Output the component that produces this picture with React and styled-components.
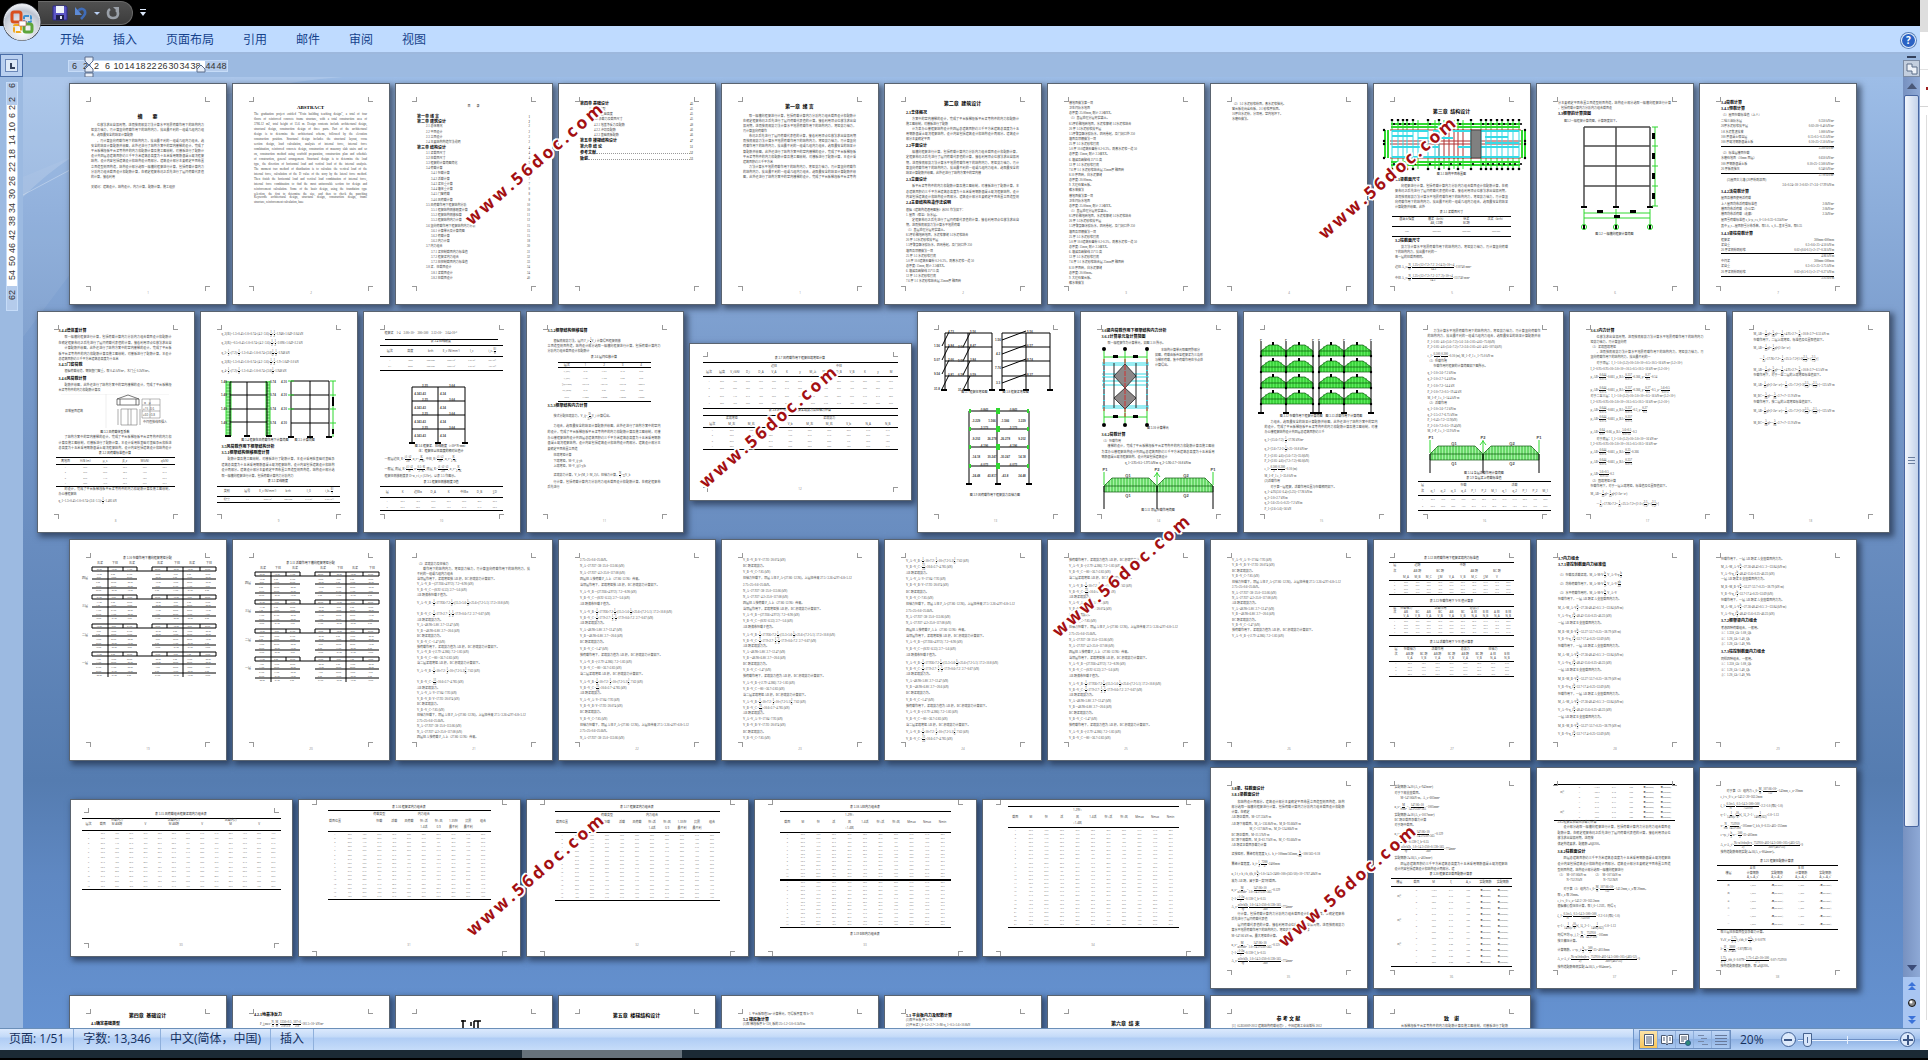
import { Fragment, useState } from "react";
import styled, { createGlobalStyle } from "styled-components";

/* ---------- document text ---------- */

const corpus =
  "本设计为某办公楼框架结构设计共四层总建筑面积约三千平方米建筑总高度为十五米采用钢筋混凝土现浇框架结构，设计内容包括建筑设计和结构设计两部分。建筑设计部分主要确定平面布置立面造型剖面构造，结构设计部分选取一榀横向框架进行计算，包括荷载计算内力分析内力组合截面设计和配筋计算，在确定框架布局之后先进行了层间荷载代表值的计算，接着利用顶点位移法求出自振周期，进而按底部剪力法计算水平地震荷载作用下的结构内力，弯矩剪力轴力，再计算竖向荷载作用下的结构内力，找出最不利的一组或几组内力组合，选取最安全的结果计算配筋并绘图，此外还进行了结构方案中的室内楼梯的设计，完成了平台板梯段板平台梁等构件的内力和配筋计算及施工图绘制，对楼板进行了配筋计算，本设计采用桩基础对基础承台和桩进行了受力和配筋计算。";

const english =
  "The graduation project entitled \"Yixin building teaching design\", a total of four floors of reinforced concrete frame structure, with a total construction area of 3786.12 m2, total height of 15.6 m. Design contents include architectural design, structural design, construction design of three parts. Part of the architectural design is to determine the architectural scheme, followed by the elevation construction position. Structural design includes the structural layout, cross section design, load calculation, analysis of internal force, internal force combination, reinforced concrete design, construction of masonry slab stairs and so on, construction method using scaffold preparation, construction plan and schedule of construction, general arrangement. Structural design is to determine the load type, the direction of horizontal load and vertical load of the internal analysis. The moment two method of distribution is to calculate the vertical load of the internal force, calculation of the D value of the story by the lateral force method. Then finish the horizontal load and vertical load combination of internal force, internal force combination to find the most unfavorable section for design and reinforcement calculation. Some of the basic design, using the foundation type selection, the first to determine the size, and then to check the punching calculation and checking, the foundation reinforcement.";

const wrapWords = (text, width) => {
  const lines = [];
  let line = "";
  text.split(" ").forEach((word) => {
    if ((line + word).length > width) {
      lines.push(line.trim());
      line = "";
    }
    line += word + " ";
  });
  lines.push(line.trim());
  return lines;
};

const cycle = (lines, from, count) =>
  Array.from({ length: count }, (_, i) => lines[(from + i) % lines.length]).join("\n");

const toc = [
  "&#第一章 绪 言|1",
  "&#第二章 建筑设计|2",
  "&+2.1 总体概况|2",
  "&+2.2 平面设计|2",
  "&+2.3 立面设计|2",
  "&+2.4 主要结构构造作法说明|2",
  "&#第三章 结构设计|4",
  "&+3.1 梁截面尺寸|4",
  "&+3.2 柱截面尺寸|4",
  "&+3.3 框架的计算简图简化|5",
  "&+3.4 荷载计算|6",
  "&++3.4.1 恒载计算|6",
  "&++3.4.2 活载计算|7",
  "&++3.4.3 梁柱重计算|7",
  "&++3.4.4 墙体重计算|8",
  "&++3.4.5 门窗荷载|8",
  "&++3.4.6 风荷载计算|8",
  "&+3.5 风荷载作用下框架结构分析|10",
  "&++3.5.1 框架结构侧移刚度计算|10",
  "&++3.5.2 框架结构侧移验算|11",
  "&++3.5.3 框架结构内力计算|12",
  "&+3.6 竖向荷载作用下框架结构内力分析|15",
  "&++3.6.1 计算单元及计算简图|15",
  "&++3.6.2 荷载计算|15",
  "&++3.6.3 内力计算|18",
  "&+3.7 内力组合|30",
  "&++3.7.1 梁控制截面内力标准值|31",
  "&++3.7.2 框架梁内力组合|32",
  "&++3.7.3 柱控制截面内力标准值|33",
  "&+3.8 梁、柱截面设计|34",
  "&++3.8.1 梁截面设计|34",
  "&++3.8.2 柱截面设计|40",
];

const practice = [
  "楼地面做法第一项",
  "卫生间防水地面",
  "总厚度: 25.00mm, 耐火 2.5级XX。",
  "（1）基层处理分层夯实填土。",
  "8.5厚彩釉地砖地面，水泥浆擦缝 1:2水泥浆结合",
  "20 厚 1:3水泥砂浆找平层",
  "1.5厚聚氨酯涂膜防水，四周卷起，及门洞口外 250",
  "墙面及顶棚做法一项",
  "25 厚 1:3 水泥砂浆打底",
  "5.0 厚 10.0建筑石膏粉 0.2-0.3%，刷素水泥浆一道 50",
  "总厚度: 15mm, 耐火 2.5级XX。",
  "6. 墙裙及踢脚线 25*15 高",
  "12 厚 1:3 水泥砂浆打底",
  "7.6 厚 1:1 水泥砂浆结合层 25mm厚 釉面砖",
  "8.10 厚面砖，白水泥擦缝",
  "总厚度: 20.00mm。",
  "9. 大理石窗台板。",
  "散水坡做法",
];

const balance = [
  "当顶层作用下，梁端弯矩按 AB 杆，BC 杆端剪力计算如下。",
  "V_A =V_B =-(27.936×4.97/2)÷7.2=-8.90 (kN)",
  "V_B =V_C =-(8.92+6.53)÷2.7=-5.6 (kN)",
  "AB 跨满布恒载 P 值为。",
  "V_A =V_B ={1/2}×17.936×7.2-{1/2}×(15.3×5.6-{1/3})×25.6×(7.2-5.1)÷17.2×10.8 (kN)",
  "V_B =V_C ={1/2}×17.9×2.7+{1/3}×{1/2}=17.9×0.6×7.2÷2.7=0.67 (kN)",
  "AB 跨梁端剪力为。",
  "V_A =48.98×5.80÷2.7=12.47 (kN)",
  "V_B =-48.98×6.80÷2.7=-20.6 (kN)",
  "BC 跨梁端剪力为。",
  "V_B =V_C =1.47 (kN)",
  "按荷载作用下，梁端剪力值为 AB 杆，BC 杆端剪力计算如下。",
  "V_A =V_B =(-2.79+4.286)÷7.2=1.83 (kN)",
  "V_B =V_C =-80+-36.7×2.83 (kN)",
  "当二层梁端弯矩 AB 杆，BC 杆端剪力计算如下。",
  "V_A =V_B ={1/2}×10×7.2+{1/2}×10×(7.2-5.1){1/2}÷7.62 (kN)",
  "V_B =V_C ={1/2}{1/2}×10.6×2.7=4.785 (kN)",
  "AB 跨梁端剪力。",
  "V_A =V_A+V=17.84+7.93 (kN)",
  "V_B =V_B+V=17.93+20.074 (kN)",
  "BC 跨梁端剪力。",
  "V_B =V_C=7.85 (kN)",
  "柱轴力恒载下，顶层 A 柱 P_A=(27.86+12.96)，上层柱传来 27.5+3.26×4.97×6.8×5.12",
  "2.75×25×0.6=25.6kN。",
  "N_A =27.937+38+25.0=113.06 (kN)",
  "N_A =27.937+4.2×25.0=117.08 (kN)",
  "四层柱 A 按荷载 P_A 上（27.86+12.96）传来。",
];

const beamForce = [
  "恒载作用下，一层 AB 跨梁 A 支座截面内力为。",
  "M_A =M_A -V{b/2}=-27.36-48.42×0.5÷2=-33.84 (kN·m)",
  "V_A =V-q_1{b/2}=48.42-15.6×0.25=46.23 (kN)",
  "一层 AB 跨梁 B 支座截面内力为。",
  "M_B =M_B -V{b/2}=-53.27+53.7×0.25=-38.79 (kN·m)",
  "V_B =V-q_1{b/2}=53.7-17.4×0.25=53.69 (kN)",
];

const design = [
  "M=147.06 kN·m，最大弯矩处计算。",
  "α_s={M/α1fcbh²}={147.06×10/1.0×14.3×250×565}=0.129",
  "ξ=1-{√1-2α/1}=0.138<ξ_b=0.55",
  "A_s={α1fcbξh/fy}={1.0×14.3×250×0.138×565/360}=774mm²",
];

const steel = (rows) =>
  Array.from(
    { length: rows },
    (_, i) => `:${i % 4 === 1 ? "四层" : ""}|${i % 2 ? "A" : "B"}|${-112 + i * 7}.6|0.${11 + i}|${570 + i * 3}|●(603mm)|●(509mm)`
  ).join("\n");

/* Each page is a list of blocks. "@a b" spreads its lines between the centres
   a and b, "@T top head bottom inset" is a ruled table, "!name a b" a figure. */
const rowOne = [
  {
    no: 1,
    text: "@34\n# 摘　　要\n@43 95\n~3 14\n~8 8\n@105\n关键词：建筑设计，结构设计，内力计算，配筋计算，施工组织",
  },
  {
    no: 2,
    text:
      "@25\n# ABSTRACT\n@32 106\n" +
      wrapWords(english, 84).slice(0, 17).map((l) => "=" + l).join("\n") +
      "\n@115 120\n=Keywords: architectural design, structural design, construction design, frame\nstructure, reinforcement calculation, base",
  },
  { no: "", text: "@24\n^ 目　　录\n@34 196\n" + toc.join("\n") },
  {
    no: "",
    text:
      "@21\n&#第四章 基础设计|45\n@27 53\n&+4.1 基础类型|45\n&++4.1.1 基础高度|45\n&++4.2 承载力及截面尺寸|45\n&++4.2.1 地基净反力及配筋|48\n&++4.2.2 冲切及配筋|46\n&++4.2.3 基础底板配筋|46\n@58 76\n&#第五章 楼梯结构设计|47\n&#第六章 结 论|51\n&.参考文献|52\n&.致谢|53",
  },
  { no: 1, text: "@24\n# 第一章  绪 言\n@34 95\n~4 8\n~6 10\n~3 36" },
  {
    no: 2,
    text:
      "@21\n# 第二章  建筑设计\n@30\n## 2.1总体概况\n@37 57\n~2 14\n~3 8\n@63\n## 2.2平面设计\n@70 91\n~5 25\n@97\n## 2.3立面设计\n@104 115\n~3 30\n@120\n## 2.4主要结构构造作法说明\n@128 199\n根据《建筑构造通用图集》苏J01 作法如下：\n1. 屋面（保温）防水层。\n~2 18\n" +
      cycle(practice, 3, 11),
  },
  { no: 3, text: "@21 201\n" + cycle(practice, 0, 36) },
  { no: 4, text: "@22 37\n（2）1:2 水泥砂浆粉面，素水泥浆抹光。\n窗台板花岗岩石板，2:1 砂浆厚贴面。\n10厚白水泥粉，分项用，室内地坪下。\n水磨石做法。" },
  {
    no: 5,
    text:
      "@29\n# 第三章  结构设计\n!plan 36 88\n@92\n^ 图 3.1 结构平面布置图\n@97\n## 3.1梁截面尺寸\n@104 125\n~5 10\n@130\n^ 表 3.1 梁截面尺寸\n@T 133 144 154 -3\n|混凝土强度|横梁（b×h）|纵梁|次梁（b×h）\n||AB, CD跨|BC跨|\n:C30|300×600|300×500|300×500\n@158\n## 3.2柱截面尺寸\n@165 175\n~2 14\n每一层的柱截面相同。\n@184\n边柱 A_c≥{N/fc}={1.25×(12×7.2×7.2÷2×14.3)×10³×4/14.3}=110740 mm²\n@195\n中柱 A_c≥{N/fc}={1.25×(12×7.2×7.2+2.7÷2)×10³×4/14.3}=151740 mm²",
  },
  {
    no: 6,
    text: "@21 26\n~~2 18\n@31\n## 3.3框架的计算简图\n@39\n+图3.2一榀框架计算简图，计算跨度如下。\n!frameOne 43 147\n@152\n^ 图 3.2 一榀横向框架计算简图",
  },
  {
    no: 7,
    text:
      "@20 26\n## 3.4荷载计算\n## 3.4.1恒载计算\n@33\n（1）屋面恒载标准值（上人）\n@39 60\n&二毡三油防水层|0.350 kN/m²\n&20厚水泥砂浆找平层|0.02×20=0.40 kN/m²\n&1:8 水泥焦渣找坡|1.000 kN/m²\n&100 厚混凝土保温层|0.15×0.5=0.25 kN/m²\n&100 厚现浇钢筋混凝土板|0.10×25=2.50 kN/m²\n@64\n-\n@66\n&|5.500 kN/m²\n@71\n（2）标准层楼面恒载\n@76 87\n&水磨石地面（10mm 面层）|0.650 kN/m²\n&100 厚钢筋混凝土板|0.10×25=2.500 kN/m²\n&20 厚板底抹灰|0.340 kN/m²\n@91\n-\n@93\n&|3.790 kN/m²\n@98 103\n+(3)屋面女儿墙 (20厚粉刷双面)\n&|3.6×0.24×18+2×0.02×17×3.6=17.99 kN/m\n@109\n## 3.4.2活荷载计算\n@116\n屋面及楼面使用活荷载\n@122 132\n&上人屋面均布活荷载标准值|2.0kN/m²\n&楼面均布活荷载（办公室）|2.0kN/m²\n&楼面均布活荷载（走廊）|2.5kN/m²\n@138 144\n屋面雪荷载标准值 s_k=μ_r s_0=1.0×0.35=0.35kN/m²\n其中 μ_r—屋面积雪分布系数，取1.0，s_0—基本雪压，取0.35\n@151\n## 3.4.3梁柱荷载计算\n@158 168\n&框架梁|300mm×600mm\n&梁自重|0.3×0.6×25=4.50 kN/m\n&20 厚梁侧粉刷砂浆|0.02×(0.6-0.1)×2×17=0.36 kN/m\n@171\n-\n@174 179\n&|4.86 kN/m\n&中间梁|300mm×500mm\n@184 190\n&梁自重|0.3×0.5×25=3.75 kN/m\n&20 厚梁侧粉刷砂浆|0.02×(0.5-0.1)×2×17=0.27 kN/m\n@194\n-\n@196\n&|3.95 kN/m",
  },
];

const rowTwo = [
  {
    no: 8,
    text:
      "@20\n## 3.4.4墙体重计算\n@27 33\n~2 30\n@38 49\n~3 20\n@54\n## 3.4.5门窗荷载\n@61\n+根据荷载规范，钢铝塑门窗重，取 0.45 kN/m²，木门重 0.2kN/m²。\n@68\n## 3.4.6风荷载计算\n@75 80\n~2 14\n!wind 83 118\n@122\n^ 图 3.3 风荷载体型系数\n@127 138\n~3 36\n@143\n^ 表 3.2 风荷载标准值计算\n@T 146 153 176 -3\n|离地面|H/B (m)|μ_s|β_z|W(kN)|q(kN)\n:*4 6\n@179 184\n~2 6\n@190\nq_1=1.3×0.45×1.0×0.74×(3.6+1.5)×{1/2}=1.485 kN",
  },
  {
    no: 9,
    text:
      "@23 60\nq_2(左)=1.3×0.45×1.0×0.74×(4.2+3.6)×{1/2}×{1/2}=1.948×1.049=2.04 kN\nq_2(右)=-0.5×0.45×1.0×0.74×(4.2+3.6)×{1/2}×{1/2}=2.096×1.049=2.2 kN\nq_3={1/2}×(7.2)×{1/2}=1.3×0.45×1.0×0.74×(3.6){1/2}×{1/2}=1.948 kN\nq_3(右)=1.3×0.45×1.0×0.74×(4.2+3.6)×{1/2}×{1/2}=1.9×1.049=2.0 kN\nq_4={1/2}×(7.2)×{1/2}=1.3×0.45×1.0×0.74×(3.6){1/2}=1.948 kN\n!windFrames 69 128\n@130\n^ 图 3.4 框架在风荷载作用下计算简图　　图 3.5 计算简图\n@136 142\n## 3.5风荷载作用下框架结构分析\n## 3.5.1框架结构侧移刚度计算\n@149 166\n~4 24\n@171\n^ 表 3.3 梁线刚度\n@T 175 185 192 -5\n|类别|层号|E_c (N/mm²)|b×h|I_0|i_b={EI/l}\n:框架梁|1-4|3.00×10⁴|300×600|5.4×10⁹|2.25×10¹⁰",
  },
  {
    no: 10,
    text:
      "@23\n框架梁　1-4　3.00×10⁴　300×500　3.12×10⁹　3.64×10¹⁰\n@29\n-\n@31\n^ 表 3.4 柱线刚度\n@T 34 45 60 -5\n|层次|高度|b×h|E_c (N/mm²)|I_c|i_c={EI/h}\n:1|4800|500×500|3.00×10⁴|5.2×10⁹|3.2×10¹⁰\n:2-4|3600|500×500|3.00×10⁴|5.2×10⁹|4.3×10¹⁰\n!stiffFrame 72 134\n@136 140\n^ 图 3.6 框架梁、柱线刚度（×10¹⁰N·mm）\n^ 注：框架柱以柱高度的相对比值计\n@148\n一般层边柱, K={i1+i2/2ic}, α_c={K/2+K}, 中柱, K={i1+i2/2ic}, α_c={K/2+K}\n@158\n一般层, 底层, K={i1+i2/ic}, α={0.5+K/2+K}, 底层, K={i1+i2+i3/2ic}, α_c={K/2+K}\n@166\n框架柱侧移刚度表 D=α_c i_c (12/h²)，以表 3.5 作图示。\n@172\n^ 表 3.5 框架柱侧移刚度 D值\n@T 175 186 200 -5\n|层|K|边柱α|D_A|K|中柱α|D_B|∑D\n:*2 8",
  },
  {
    no: 11,
    text:
      "@20\n## 3.5.2框架结构侧移验算\n@30 41\n+根据底部剪力法，层间 F_i={1/2}V_i 计算得到框架侧移\n~~2 14\n@47\n^ 表 3.6 层间位移计算\n@T 51 56 91 10\n|层次|1|2|3|4\n:F_i(kN)|3.48|4.104|3.42|3.72\n:V_i(kN)|14.01|11.02|6.00|3.72\n:∑D(N/mm)|175410|175410|175410|120016\n:Δu_i(mm)|0.10|0.07|0.03|0.02\n:Δu/h|1/4800|1/3600|1/3600|1/3600\n@95\n## 3.5.3框架结构内力计算\n@105\n+按式分配柱端剪力，V_ij={D/∑D}V_i 计算得出。\n@116 139\n~5 10\n@145 156\n+柱端弯矩计算\n+下端弯矩，M=V_ij·yh\n+上端弯矩，M=V_ij(1-y)h\n@164\n+梁端剪力计算，V_b=(M_1+M_2)/l，柱轴力计算，{N/1}=∑V_b\n@172 177\n~2 4",
  },
  {
    wide: true,
    inset: 14,
    no: 12,
    text:
      "@16\n^ 表 3.7 风荷载作用下框架柱端弯矩计算\n@T 19 34 66 -6\n||||||边柱|||||中柱|||\n|层次|层高|V_i(kN)|D_i|D_A|V_A|K|y|M_上|M_下|D_B|V_B|K|y|M\n:*4 15\n@68\n^ 表 3.8 风荷载作用下框架梁端剪力及柱轴力计算\n@T 72 84 107 -6\n||梁端弯矩|||||梁端剪力||\n|层次|M_左|M_右|l|V_b|M_左|M_右|V_b|N_A|N_B\n:*4 10",
  },
  {
    no: 13,
    text:
      "!moments 19 80\n@82\n^ 图 3.7 框架柱弯矩图　　　　　图 3.8 框架梁弯矩图\n!shears 97 175\n@185\n^ 图 3.9 风荷载作用下框架剪力及轴力图",
  },
  {
    no: 14,
    text:
      "@20 26\n## 3.6竖向荷载作用下框架结构内力分析\n## 3.6.1计算单元及计算简图\n@33\n+取一榀框架作为计算单元，如图 3.10 所示。\n!unit 36 116\n@118\n^ 图 3.10 计算单元\n@124\n## 3.6.2荷载计算\n@131\n（1）恒载作用\n@136 147\n~3 22\n@153\n^ q_1=3.95×0.5=1.975 kN/m  q_2=5.96×2.7=10.8 kN/m\n!load 156 198\n@200\n^ 图 3.11 顶层恒载作用简图",
  },
  {
    no: 15,
    text:
      "!storeys 28 103\n@106\n^ 图 3.12 恒载作用下框架计算简图　图 3.13 活载作用下计算简图\n@112 122\n~3 20\n@129 138\nq_1=(15.6×7.2)÷{1/2}=17.96 kN/m²\nq_2=[3.6×7.2-2×{1/2}]×25=10.8 kN/m²\n@146 151\nP_1=(2.05+4.6)×(5.6×7.2)=35.0(kN)\nP_2=(2.05+4.6)×(7.2×7.2)=86.0(kN)\n@158 166\ne_1={0.500/2}-{0.300/2}=0.10 (m)\nM_1=P_1 e_1=35.0 kN·m\n@171 199\n(2)活载作用\n+对于第一层框架，活载作用位置与恒载相同如下。\nq_1=4.95(3.6+6.4)×(5.25)=17.96 kN/m\nq_2=2.0×2.7 kN/m\nq_3=3.6×25×5×0.25=7.2 kN/m\nP_1=(2.6×5.6)=56 kN",
  },
  {
    no: 16,
    text:
      "@21 26\n~2 30\n@32 37\nP_1=2.05+4.6×(5.6×7.2)×5.6+3.6×2.05×4.65=75.0(kN)\nP_2=2.05+4.6×(5.6×7.2)×7.2×3.6×2.05×4.6+4.65=107.6(kN)\n@45\ne_1={0.500/2}-{0.300/2}=0.10 (m), M_1=P_1 e_1=75.0 kN·m\n@51 56\n（1）恒载作用\n+恒载作用时框架的计算简图如下图所示。\n@63 88\nq_1=2.0×3.6=7.2 kN/m\nq_2=2.0×2.7=5.4 kN/m\nP_1=2.0×7.2=14.4 kN\nP_2=2.0×7.2×0.5=19.44 kN\nM_1=P_1 e_1=14.4 kN·m\n@93\n（2）活载作用\n@99 121\nq_1=2.0×3.6=7.2 kN/m\nq_2=2.5×2.7=6.75 kN/m\nP_1=0.45×7.2=12.9(kN)\nP_2=2.0×7.2×0.5=19.4(kN)\nM_1=P_1 e_1=12.9 kN·m\n!load 124 162\n@163 167\n^ 图 3.14 各层活载作用计算简图\n^ 表 3.9 各层梁上荷载标准值\n@T 170 185 200 -10\n|层||||恒载|||||活载|||\n|次|q_1|q_2|q_3|q_4|P_1|P_2|M_1|q_1|q_2|P_1|P_2|M_1\n:*2 13",
  },
  {
    no: 17,
    text:
      "@20\n## 3.6.3内力计算\n@27 32\n~2 12\n@37\n（1）梁端固端弯矩\n@42 47\n~2 20\n@53 59\n+对于顶层：I_1=1.0×(5.2)×10×3.0×10⁴×0.5×10.5=16 kN·m² (5.2×10⁴)\nI_2=0.95×0.95×10×3.0×10⁴×10.5×0.5×10.5=16 kN·m² (5.2×10⁴)\n@66\nμ_AB={0.644/0.975}=0.661, μ_BA={0.357/0.975}=0.366, μ={0.27/0.5}=0.54\n@79\nμ_AB={0.644/0.975}=0.661, μ_BA={0.357/0.975}=0.366, μ={0.27/0.5}=0.5, μ={5.6×0.5/0.975}\n@86 92\n对于二至三层：I_1=1.0×(5.2)×10×3.0×10⁴×0.5=16 kN·m² (5.2×10⁴)\nI_2=0.95×0.95×10×3.0×10⁴×10.5×0.5×10.5=16 kN·m² (5.2×10⁴)\n@99\nμ_AB={0.644/0.975}=0.661, μ_BA={0.357/0.975}=0.3, μ={0.27/0.5}\n@108\nμ_AB={0.644/0.975}=0.661, μ_BA={0.357/0.975}\n@121\nμ_AB={0.64/0.97}=0.66, μ_BA={5.6×0.5/0.9755}=0.3\n@129 134\n+对于底层：I_1=1.0×(5.2)×10×3.0×10⁴=16 kN·m²\nI_2=0.95×0.95×10×3.0×10⁴×10.5×0.5×10.5=16 kN·m²\n@141\nμ_AB={0.644/0.975}=0.661, μ_BA={0.35/0.97}=0.366\n@151\nμ_AB={0.644/0.975}=0.661, μ_BA={0.357/0.975}\n@163\nμ_AB={5.6×0.5/0.9755}=0.3\n@171 176\n（2）固端弯矩计算\n恒载作用下，对于一层上端弯矩，标准值及位置取值如下。\n@183\nM_AB=-{1/12}ql²-{1/12}ql²(1-2a²+a³)\n@193\n+=-{1/12}×17.96×7.2²-{1/12}×25.5×7.2²×[1-2×({2.1/7.2})²+({2.1/7.2})³]",
  },
  {
    no: 18,
    text:
      "@23\nM_AB=-{1/12}ql²-{5/96}ql²=-{1/12}×4.95×2.7²-{5/96}×10.8×2.7²=6.55 kN·m\n@30\n恒载作用下，二层上端弯矩，标准值及位置取值如下。\n@37\nM_AB=-{1/12}ql²-{1/12}ql²(1-2a²+a³)\n@48\n+=-{1/12}×17.96×7.2²-{1/12}×25.5×7.2²[1-2({2.1/7.2})²+({2.1/7.2})³]\n@59\nM_AB=-{1/12}ql²-{5/96}ql²=-{1/12}×4.95×2.7²-{5/96}×10.8×2.7²=6.5 kN·m\n@65\n恒载作用下，对于一至二层的上端弯矩标准值如下。\n@74\nM_AB={1/12}ql²(1-2a²+a³)=-{1/12}×25×7.2²[1-2({2.1/7.2})²+({2.1/7.2})³]=-125 kN·m\n@85\nM_BC=-{5/96}ql²=-{5/96}×2.7²×7=11.9 kN·m\n@92\n恒载作用下，按二层的上端弯矩标准值如下。\n@100\nM_AB={1/12}ql²(1-2a²+a³)=-{1/12}×25×7.2²[1-2({2.1/7.2})²+({2.1/7.2})³]=-125 kN·m\n@112\nM_BC=-{5/96}ql²=-{5/96}×2.7²×7=11.9 kN·m",
  },
];

const rowThree = [
  { no: 19, text: "@20\n^ 表 3.10 恒载作用下横向框架弯矩分配\n!distribution 22 142" },
  { no: 20, text: "@25\n^ 表 3.11 活载作用下横向框架弯矩分配\n!distribution 27 146" },
  {
    no: 21,
    text:
      "@26\n（3）梁端剪力及柱轴力\n@31 36\n~2 12\n@41 57\n" + cycle(balance, 0, 4) + "\n@64 75\n" + cycle(balance, 4, 2) + "\n@82 125\n" + cycle(balance, 6, 9) + "\n@132 143\n" + cycle(balance, 15, 2) + "\n@150 199\n" + cycle(balance, 17, 10),
  },
  ...[22, 23, 24, 25].map((no, i) => ({ no, text: "@22 200\n" + cycle(balance, 23 - i * 4, 29 + (i % 2)) })),
  { no: 26, text: "@22 98\n" + cycle(balance, 18, 4) + "\n" + cycle(balance, 22, 4) + "\n" + cycle(balance, 6, 7) },
  {
    no: 27,
    text:
      "@20\n^ 表 3.12 风荷载作用下框架梁端内力标准值\n@T 23 41 56 -6\n|层||边跨||||中跨||||\n|次||AB 跨||BC 跨|||AB 跨||BC 跨|\n||M_A|M_B|M_C|∑M|V_A|V_B|M_C|∑M|V\n:*4 11\n@63\n^ 表 3.13 恒载作用下 V-N 值计算表\n@T 67 81 97 -6\n|层|恒载轴力|||活载作用|||总剪力|||\n|次|AB|BC|AB|BC|AB|BC|A 柱|B 柱|A 柱|B 柱\n||V_A|V_B|V_A|V_B|V_A|V_B|N_A|N_B|N_A|N_B\n:*4 11\n@104\n^ 表 3.14 活载作用下 V-N 值计算表\n@T 107 122 138 -6\n|层|恒载轴力||活载作用||总剪力||柱轴力|\n|次|AB 跨|BC 跨|AB 跨|BC 跨|AB 跨|BC 跨|A 柱|B 柱\n||V_A|V_B|V_A|V_B|V_A|V_B|N_A|N_B\n:*4 9",
  },
  {
    no: 28,
    text:
      "@20 26\n## 3.7内力组合\n## 3.7.1梁控制截面内力标准值\n@36 54\n（1）恒载及活载梁端，M_A=M-V·{b/2}, V_A=V-q·{b/2}\n（2）均布荷载作用下，M_A=M-V·{b/2}, V_A=V-{q/2}{b/2}\n（3）水平荷载作用时，M_A=M-V·{b/2}, V_A=V\n@61 195\n" +
      cycle(beamForce, 0, 18),
  },
  {
    no: 29,
    text:
      "@21 75\n" + cycle(beamForce, 0, 9) + "\n@82\n## 3.7.2框架梁内力组合\n@90 106\n考虑四种荷载组合，一般用。\n①：1.35S_Gk+1.0S_Qk\n②：1.2S_Gk+1.4S_Qk\n③：1.2S_Gk+1.4S_Wk\n@113\n## 3.7.3柱控制截面内力组合\n@121 137\n同样四种组合，一般用。\n①：1.35S_Gk+1.0S_Qk\n②：1.2S_Gk+1.4S_Qk\n③：1.2S_Gk+1.4S_Wk",
  },
];

const rowFour = [
  {
    wide: true,
    inset: 14,
    no: 30,
    text:
      "@16\n^ 表 3.15 风荷载组合框架梁端内力组合表\n@T 19 32 91 -8\n|||恒载内力||||活载内力||||风载内力|||\n|层次|截面|M AB跨||V||M AB跨||V||M||V|\n||||||||||||||\n:*12 14",
  },
  {
    wide: true,
    inset: 6,
    no: 31,
    text: "@9\n^ 表 3.16 框架梁内力组合表\n@T 11 34 101 10\n||||荷载类型|||内力组合|||\n|截面位置|||恒载|活载|风荷载|恒+活|恒+风|1.35恒|抗震|组合\n|||||||1.4活|0.9|最不利|最不利\n:*16 11",
  },
  {
    wide: true,
    inset: 6,
    no: 32,
    text: "@9\n^ 表 3.17 框架梁内力组合表\n@T 12 35 102 9\n||||荷载类型|||内力组合|||\n|截面位置|||恒载|活载|风荷载|恒+活|恒+风|1.35恒|抗震|组合\n|||||||1.4活|0.9|最不利|最不利\n:*16 11",
  },
  {
    wide: true,
    inset: 6,
    no: 33,
    text:
      "@9\n^ 表 3.18 A柱内力组合表\n@T 12 34 81 6\n|||||1.2恒+||||||\n|截面|M|恒|活|风|1.4活|恒+活|恒+风|Mmax|Nmax|Nmin\n|||||+1.4风||||||\n:*12 11\n@T 81 82 129 6\n:*12 11\n@136\n^ 表 3.19 B柱内力组合表",
  },
  {
    wide: true,
    inset: 6,
    no: 34,
    text: "@T 7 29 129 6\n|||||1.2恒+||||||\n|截面|M|恒|活|风|1.4活|恒+活|恒+风|Mmax|Nmax|Nmin\n|||||+1.4风||||||\n:*24 11",
  },
  {
    no: 35,
    text:
      "@22 28\n## 3.8梁、柱截面设计\n## 3.8.1梁截面设计\n@36 47\n~3 6\nAB 跨正截面，M=127.35kN·m\n@58 79\nAB 跨下部截面，M_A=136.8kN·m，M_B=93.66kN·m\n+++M_C=117.8kN·m，M_D=124.86kN·m\nBC 跨正截面，M=21.57kN·m\nBC 跨下部截面，M_B=61.71kN·m，M_C=93.66kN·m\nAB 跨梁正截面承载力计算\n@87\n梁按矩形，翼缘有效宽度 b_f，h_f=100mm/565mm, {h/h0}=100/565=0.18\n@97\n翼缘计算宽度，b_f={l/3}={7200/3}=2400mm\n@107\nα_1 f_c b_f h_f(h_0-{h/2})=1.0×14.3×2400×100×(565-50)×10=1767.48kN·m\n@115\n故为 AB 跨，属于第一类T形截面。\n@123 140\n" +
      cycle(design, 1, 3) +
      "\n@148 164\n~2 12\n~2 26\n@170 194\n" +
      cycle(design, 0, 4),
  },
  {
    no: 36,
    text:
      "@21 32\n实配钢筋 3●20 (A_s=942mm²)\n对于下部支座截面。\n+M=147.06kN·m，A_s=603mm²\n@40\nα_s={M/fcbh²}={147.06×10/14.3×250×565}=1005mm²\n@49 59\n实配钢筋 4●18 (A_s=1017mm²)\nBC 跨正截面承载力计算\n对于跨中截面。\n@67 82\n" +
      cycle(design, 1, 3) +
      "\n@92 103\n实配钢筋 2●16(A_s=402mm²)\n~2 20\n@108\n^ 表 3.20 框架梁正截面配筋计算表\n@T 111 119 200 -4\n|楼层|截面|M|ξ|A_s|实配钢筋|实配钢筋\n" +
      steel(13),
  },
  {
    no: 37,
    text:
      "@T 17 18 54 -4\n" +
      steel(7) +
      "\n@56 72\n3.8.2框架梁斜截面承载力计算\n~3 12\n@78\n满足构造要求，配箍筋 ●8@200。\n@85\n## 3.8.2柱截面设计\n@92 104\n~3 22\n@109 114\n（1）　M=107.06kN·m　　　（2）　M=107.6kN·m\n　　　N=752.91kN　　　　　　　N=752.9kN\n@122\n+对于第（1）组内力 e_0={M/N}={107.06×10³/752}=142.2mm, e_a 取 20mm。\n@129 140\n取 e_a 取 20mm。\ne_i=e_0+e_a=142.2+20=162.2mm\n根据偏心受压柱计算，取 l_0=1.25H，则得 η\n@149\nζ_1={0.5fcA/N}={0.5×14.3×500×500/752910}=2.3>1.0 (取ζ=1.0)\n@159\nη=1+{1/1400(e/h)}({l0/h})²ζ_1ζ_2=1+{1/1400(162)}×1.0=1.13\n@168 175\n则得平均 ηe_i, ξ={N/fcb}={752910/14.3×500}=105mm\n按大偏压计算。\n@183\n计算钢筋，e=ηe_i+{h/2}-a={500/2}-35=403.8mm\n@192\nA_s=A_s'={Ne-α1fcbx(h-x/2)/fy(h0-a)}={752910×403-14.3×500×105×(465-52)/360×(465-35)}<0\n@201\n按构造配筋每侧实配 4●16(A_s=804mm²)。",
  },
  {
    no: 38,
    text:
      "@24\n+对于第（2）组内力 e_0={M/N}={107.06×10³/752}=142mm, e_a=20mm\n@31\ne_i=e_0+e_a=142.2+20=162.2mm\n@39\nζ_1={0.5fcA/N}={0.5×14.3×500×500/752910}=2.3>1.0 (取ζ=1.0)\n@48\nη=1+{1/1400(e/h)}({l0/h})²ζ_1ζ_2=1+{1/1400(162)}×1.0=1.13\n@59\nx={N/fcb}={752910/14.3×500}=105mm<ξ_b h_0=0.55×465=255mm\n@68\ne=ηe_i+{h/2}-a=+{500/2}-35=403mm\n@78\nA_s=A_s'={Ne-α1fcbx(h-x/2)/fy(h0-a)}={752910×403-14.3×500×105×(465-52)/360×(465-35)}<0\n@86\n按构造配筋每侧实配 4●16(A_s=804mm²)。\n@95\n^ 表 3.21 框架柱配筋计算表\n@T 98 115 163 -4\n||A 柱||B 柱|\n|楼层|计算钢筋|实配钢筋|计算钢筋|实配钢筋\n||A_s=A_s'|A_s=A_s'|A_s=A_s'|A_s=A_s'\n:四|A_min|4●(804mm²)|A_min|4●(804mm²)\n:四|A_min|4●(804mm²)|A_min|4●(804mm²)\n:三|A_min|4●(804mm²)|A_min|4●(804mm²)\n:二|A_min|4●(804mm²)|A_min|4●(804mm²)\n:一|A_min|4●(804mm²)|A_min|4●(804mm²)\n:一|A_min|4●(804mm²)|A_min|4●(804mm²)\n@166\n取三层柱斜截面受剪承载力计算。\n@173\nV≤V_u={1.75/λ+1}f_t bh_0+{nA/s}h_0+0.07N\n@182\nλ={H/2h}={3600/2×465}=3.87(取3.0)\n@193\n{1.75/λ+1}f_tbh_0+0.07N={1.75×1.43×10×500/3+1}+0.07×752910\n@200\n按构造配筋满足柱箍筋，取 ●8@200。",
  },
];

const rowFive = [
  { no: "", text: "@21\n# 第四章  基础设计\n@29\n## 4.1确定基础类型" },
  { no: "", text: "@20\n## 4.2.1地基净反力\n@29\n+P_j,max={N/A}+{M/W}={1350×0.5/2.8×2.8}+{107×6/2.8}=181.5×10³ kN/m²" },
  { no: "", text: "!stub 24 40" },
  { no: "", text: "@21\n# 第五章  楼梯结构设计" },
  { no: "", text: "@20\n+1. 平台板取值1m² 计算单元，可得板厚度 取 h=70\n@25\n## 5.2 梯段板计算\n@30\n(1)取 梯段板厚 h=120, 板的 25×1.2=3.0×0.5kN/m" },
  { no: "", text: "@21\n## 5.3 平台板内力及配筋计算\n@26 30\n(1)取平台板 厚 h=70\n(2)平台梁 l_0=1.2×2.7²÷2×M×q_1=0.5×5.6×10.8kN" },
  { no: "", text: "@29\n# 第六章  结 束" },
  { no: "", text: "@24\n# 参 考 文 献\n@32\n[1]《GB50009-2012 建筑结构荷载规范》，中国建筑工业出版社 2012" },
  { no: "", text: "@24\n# 致　谢\n@32\n~1 36" },
];

/* ---------- figures, drawn in page coordinates ---------- */

const Lines = ({ d, c = "#000", w = 1 }) => <path d={d} stroke={c} strokeWidth={w} fill="none" />;

const Num = ({ x, y, children, s = 3, a = "middle" }) => (
  <text x={x} y={y} fontSize={s} fontWeight="700" textAnchor={a} fontFamily="Liberation Sans, sans-serif" fill="#000">
    {children}
  </text>
);

const grid = (xs, ys, bottom) =>
  xs.map((x) => `M${x} ${ys[0]}V${bottom}`).join("") + ys.map((y) => `M${xs[0]} ${y}H${xs[xs.length - 1]}`).join("");

const Feet = ({ xs, y }) => <Lines d={xs.map((x) => `M${x - 3} ${y}h6`).join("")} w={2} />;

const GREEN = "#2fd82f";
const CYAN = "#35dbe6";

const Plan = () => {
  const xs = [19, 25, 30, 34, 40, 45, 55, 62, 66, 71, 76, 81, 85, 90, 98, 108, 113, 118, 124, 129, 135, 140, 146];
  const posts = xs.filter((_, i) => i % 2 === 0 || i > 14 || i < 5);
  return (
    <>
      <Lines d="M18 5H147M18 8H147M18 43H147M18 46H147M12 11V39M15 11V39M149 11V39M152 11V39" c={GREEN} w={2} />
      <Lines d={xs.map((x) => `M${x} 1V11M${x} 39V50`).join("")} c={GREEN} />
      <Lines d={xs.slice(8, 15).map((x) => `M${x} 10V40`).join("") + "M17 11H148M17 22H148M17 25H148M17 39H148"} c="#b03030" w={1} />
      <Lines d={xs.map((x) => `M${x} 11V39`).filter((_, i) => i < 9 || i > 13).join("")} c={CYAN} />
      <Lines d="M19 12H55M60 12H146M19 17H40M45 19H80M19 28H66M85 28H146M112 18H135M112 24H146M19 38H146" c={CYAN} w={2} />
      <rect x="98" y="11" width="10" height="28" fill="#808080" stroke="#222" strokeWidth="0.6" />
      {posts.map((x) => (
        <g key={x}>
          <circle cx={x} cy="1" r="1.3" />
          <circle cx={x + 2} cy="5" r="1.1" />
          <circle cx={x + 2} cy="45" r="1.1" />
          <circle cx={x} cy="50" r="1.3" />
        </g>
      ))}
      {[11, 22, 25, 39].map((y) => (
        <g key={y}>
          <circle cx="11" cy={y} r="1.2" />
          <circle cx="152" cy={y} r="1.2" />
        </g>
      ))}
    </>
  );
};

const FrameOne = () => (
  <>
    <Lines d={grid([48, 80, 114], [1, 20, 40, 60], 80)} c="#4a4a4a" w={1.5} />
    <Feet xs={[48, 80, 114]} y={81} />
    <Lines d="M119 1V80M116 1h6M116 20h6M116 40h6M116 60h6M116 80h6M48 83V98M80 83V98M114 83V98M48 87H114M48 92H114" c={GREEN} />
    {[10, 30, 50, 70].map((y) => (
      <rect key={y} x="116" y={y - 3} width="3" height="6" />
    ))}
    <path d="M61 84h6v3h-6zM94 84h6v3h-6zM78 89h6v3h-6z" />
    {[48, 80, 114].map((x) => (
      <g key={x}>
        <circle cx={x} cy="101" r="2.6" fill="#fff" stroke={GREEN} />
        <rect x={x - 1} y="99" width="2" height="4" />
      </g>
    ))}
  </>
);

const Wind = () => (
  <>
    <Lines d="M24 0H132M69 0V34" c="#ddd" w={0.5} />
    <text x="28" y="18" fontSize="3">双坡屋面建筑</text>
    <Lines d="M80 11V5l11-4 11 4v6zM80 5h22M83 5v6M99 5v6" c="#555" w={0.8} />
    <Lines d="M84 15h16v16h-16zM91 15v16M94 15v16M81 15v16M103 15v16" c="#777" w={0.6} />
    <Lines d="M105 5h18v19h-18zM113 5v19M105 11h18M105 17h18" c="#888" w={0.6} />
    <text x="107" y="10" fontSize="3">α　μ</text>
    <text x="106" y="16" fontSize="3">≤15 -0.6</text>
    <text x="106" y="22" fontSize="3">≥60 +0.8</text>
    <text x="106" y="29" fontSize="3">中间值按线性插入</text>
  </>
);

const WindFrames = () => (
  <>
    <path d="M26 1h5v55h-5zM66 1h4v55h-4z" fill="#9df59d" />
    <Lines d={Array.from({ length: 18 }, (_, i) => `M26 ${2 + i * 3}h5M66 ${2 + i * 3}h4`).join("")} c="#11a011" w={0.6} />
    <Lines d="M26 1V56M31 1V56M66 1V56M70 1V56" c={GREEN} />
    <Lines d={grid([30, 47, 67], [2, 15, 29, 42], 56)} />
    <Feet xs={[28, 47, 69]} y={56} />
    <Lines d={grid([91, 110, 129], [1, 15, 29, 43], 57)} />
    <Feet xs={[91, 110, 129]} y={57} />
    <Lines d="M133 1V57M130 1h6M130 15h6M130 29h6M130 43h6M88 1h6M88 15h6M88 29h6" c={GREEN} />
    {[2, 15, 29, 43].map((y) => (
      <g key={y}>
        <Num x={24} y={y + 1}>1.49</Num>
        <Num x={73} y={y + 1}>0.74</Num>
        <Num x={84} y={y + 1}>4.10</Num>
      </g>
    ))}
    <path d="M132 17h2v9h-2zM132 49h2v5h-2z" />
  </>
);

const StiffFrame = () => (
  <>
    <Lines d={grid([49, 75, 102], [4, 18, 32, 46], 60)} />
    <Feet xs={[49, 75, 102]} y={60} />
    {[4, 18, 32, 46].map((y) => (
      <g key={y}>
        <Num x={62} y={y - 0.5}>2.25</Num>
        <Num x={89} y={y - 0.5}>3.64</Num>
        <Num x={57} y={y + 8}>4.343.43</Num>
        <Num x={80} y={y + 8}>4.34</Num>
      </g>
    ))}
  </>
);

const Moments = () => (
  <>
    <Lines d={grid([28, 51, 75], [3, 17, 31, 46], 60)} />
    <Lines d={[3, 17, 31, 46].map((y) => `M25 ${y + 13}L32 ${y - 1}M46 ${y + 14}L53 ${y}`).join("")} />
    <Feet xs={[27, 50, 75]} y={60} />
    <Lines d={grid([85, 109, 133], [3, 17, 31, 46], 60)} />
    <Lines d={[3, 17, 31, 46].map((y) => `M85 ${y + 7}L109 ${y - 2}`).join("")} />
    <Feet xs={[85, 109, 133]} y={60} />
    {[3, 17, 31, 46].map((y, i) => (
      <g key={y}>
        <Num x={34} y={y}>{[4.73, 9.84, 2.66, 0.81][i]}</Num>
        <Num x={56} y={y}>{[5.56, 8.47, 3.84, 0.59][i]}</Num>
        <Num x={20} y={y + 14}>{[1.56, 5.07, 9.54, 31.8][i]}</Num>
        <Num x={44} y={y + 15}>{[2.04, 5.58, 6.58, 31.4][i]}</Num>
        <Num x={81} y={y + 8}>{[1.56, 4.2, 7.76, 3.3][i]}</Num>
        <Num x={113} y={y}>{[5.56, 6.57, 8.74, 8.37][i]}</Num>
      </g>
    ))}
  </>
);

const Shears = () => (
  <>
    <Lines d={grid([52, 80, 112], [3, 21, 39, 58], 76)} />
    <Feet xs={[52, 81, 112]} y={76} />
    {[3, 21, 39, 58].map((y, i) => (
      <g key={y}>
        <Lines d={`M53 ${y - 2}v4M80 ${y - 3}v6M82 ${y - 3}v6M111 ${y - 2}v4`} c={GREEN} w={2} />
        <Num x={67} y={y - 0.5}>{["-0.843", "-2.173", "-4.196", "-6.072"][i]}</Num>
        <Num x={96} y={y - 0.5}>{["-0.843", "-2.173", "-4.196", "-6.072"][i]}</Num>
        <Num x={59} y={y + 11}>{["-3.229", "-9.202", "-14.18", "-24.48"][i]}</Num>
        <Num x={75} y={y + 11}>{["1.566", "26.278", "30.247", "43.817"][i]}</Num>
        <Num x={88} y={y + 11}>{["-1.566", "-26.278", "-30.247", "-43.8"][i]}</Num>
        <Num x={105} y={y + 11}>{["3.229", "9.202", "14.18", "24.48"][i]}</Num>
      </g>
    ))}
  </>
);

const Unit = () => (
  <>
    <Lines d="M24 3V16M45 3V16M67 3V16M24 10H67M24 61V76M45 61V76M67 61V76M24 70H67" c={GREEN} />
    <Lines d="M22 16h47M22 18h47M22 27h47M22 30h47M22 34h47M22 38h47M22 59h47M22 61h47" c={CYAN} />
    <Lines d="M24 16V61M67 16V61" c={CYAN} w={2} />
    <path d="M45 17L56 29 45 41 34 29zM45 41L56 51 45 62 34 51z" fill="#8d8787" stroke="#222" strokeWidth="0.8" />
    <Lines d="M34 16V61M56 16V61" c="#222" />
    <path d="M24 12V64M45 12V70M67 12V64" stroke="#d03030" strokeDasharray="5 1" />
    {[24, 45, 67].map((x) => (
      <g key={x}>
        <circle cx={x} cy="2" r="2" />
        <circle cx={x} cy="78" r="2" />
      </g>
    ))}
    <path d="M33 8h5v3h-5zM53 8h5v3h-5zM33 68h5v3h-5zM53 68h5v3h-5z" />
    <text x="81" y="4" fontSize="3">本结构计算单元取图阴影部分</text>
    <text x="75" y="9" fontSize="3">如图，荷载由板传至框架梁为三角形</text>
    <text x="75" y="14" fontSize="3">与梯形荷载，集中荷载作用在节点处</text>
    <text x="75" y="19" fontSize="3">计算得出。</text>
  </>
);

const Trapezoids = ({ xs, top, base, low, step = 3, fill = "#5dec5d" }) => {
  const shape = (a, b) => `M${a} ${base}L${a + 8} ${top}H${b - 8}L${b} ${base}V${low}H${a}z`;
  const bars = [];
  for (let x = xs[0] + 2; x < xs[2]; x += step) {
    const near = Math.min(...xs.map((v) => Math.abs(v - x)));
    bars.push(`M${x} ${Math.max(top, base - near)}V${low}`);
  }
  return (
    <>
      <path d={shape(xs[0], xs[1]) + shape(xs[1], xs[2])} fill={fill} />
      <Lines d={bars.join("")} c="#12b012" w={0.8} />
      <path d={shape(xs[0], xs[1]) + shape(xs[1], xs[2]) + `M${xs[0]} ${base}H${xs[2]}`} fill="none" stroke="#0c540c" strokeWidth="0.7" />
    </>
  );
};

const Load = () => (
  <>
    <Lines d="M24 5V18M77 5V18M133 5V18M74 10l3-4 3 4" c={GREEN} />
    <Trapezoids xs={[24, 77, 133]} top={11} base={19} low={25} fill="#a4f2a4" />
    <Lines d="M24 19V42M77 19V42M133 19V42" />
    <Num x={25} y={4} s={4}>P1</Num>
    <Num x={77} y={4} s={4}>P2</Num>
    <Num x={133} y={4} s={4}>P1</Num>
    <Num x={48} y={10} s={4}>Q1</Num>
    <Num x={106} y={10} s={4}>Q2</Num>
    <Num x={48} y={30} s={4}>Q1</Num>
    <Num x={106} y={30} s={4}>Q2</Num>
  </>
);

const Storeys = () => (
  <>
    {[[18, 43, 70], [76, 101, 128]].map((xs) => (
      <g key={xs[0]}>
        {[6, 22, 38, 54].map((y) => (
          <g key={y}>
            <Trapezoids xs={xs} top={y} base={y + 6} low={y + 11} />
            <circle cx={xs[0]} cy={y + 11} r="1.2" />
            <circle cx={xs[1]} cy={y + 11} r="1.2" />
            <circle cx={xs[2]} cy={y + 11} r="1.2" />
            <rect x={xs[0] + 11} y={y - 3} width="2" height="3" />
            <rect x={xs[1] + 12} y={y - 3} width="2" height="3" />
          </g>
        ))}
        <Lines d={xs.map((x) => `M${x} 2V74`).join("")} />
        <Feet xs={xs} y={74} />
        {xs.map((x) => (
          <Num key={x} x={x} y={2}>P</Num>
        ))}
      </g>
    ))}
  </>
);

const Distribution = () => (
  <>
    {[28, 43, 60, 88, 105, 120, 137].map((x) => (
      <text key={x} x={x} y="3" fontSize="3">{x % 2 ? "下柱" : "右梁"}</text>
    ))}
    {[6, 34, 63, 91].map((y, k) => (
      <g key={y}>
        <Lines d={`M23 ${y}h45v4h-45zM83 ${y}h64v4h-64zM54 ${y}v4M98 ${y}v4M131 ${y}v4M68 ${y + 4}h15M23 ${y + 12}h45M83 ${y + 12}h64M23 ${y + 21}h45M83 ${y + 21}h64`} />
        <text x="13" y={y + 12} fontSize="3">{"四三二一"[k]}层</text>
        {[3, 8, 11, 16, 20, 24].map((dy, r) =>
          [27, 42, 58, 86, 104, 118, 136].map((x, i) => (
            <text key={x + "-" + r} x={x} y={y + dy} fontSize="2" fill="#777">
              {(((x * 7 + r * 13 + k * 5 + i) % 89) - 40.5).toFixed(2)}
            </text>
          ))
        )}
      </g>
    ))}
    <Lines d="M39 6V116M114 6V116" />
  </>
);

const Stub = () => <Lines d="M68 1V16M66 2H71M79 2V16M79 2H86M83 2V16M76 3v4" w={1.5} />;

const figures = {
  plan: Plan,
  frameOne: FrameOne,
  wind: Wind,
  windFrames: WindFrames,
  stiffFrame: StiffFrame,
  moments: Moments,
  shears: Shears,
  unit: Unit,
  load: Load,
  storeys: Storeys,
  distribution: Distribution,
  stub: Stub,
};

/* ---------- page rendering ---------- */

const inline = (text) =>
  text.split(/(\{[^/}]*\/[^}]*\})/).map((part, i) => {
    if (part[0] !== "{") return <Fragment key={i}>{part}</Fragment>;
    const [top, bottom] = part.slice(1, -1).split("/");
    return (
      <Fraction key={i}>
        <span>{top}</span>
        <span>{bottom}</span>
      </Fraction>
    );
  });

const cellsOf = (lines, mark) =>
  lines
    .filter((l) => l[0] === mark)
    .flatMap((l) => {
      if (l[1] !== "*") return [l.slice(1).split("|")];
      const [rows, cols] = l.slice(2).split(" ").map(Number);
      return Array.from({ length: rows }, (_, r) =>
        Array.from({ length: cols }, (_, c) => (c === 0 ? String(r + 1) : (((r * 31 + c * 17) % 90) + 8.6).toFixed(1)))
      );
    });

const parse = (text) => {
  const blocks = [];
  text.split("\n").forEach((line) => {
    if (line[0] === "@" || line[0] === "!") {
      blocks.push({ head: line, lines: [] });
    } else {
      blocks[blocks.length - 1].lines.push(line);
    }
  });
  let end = 0;
  return blocks.map(({ head, lines }) => {
    const parts = head.slice(head[1] === "T" ? 3 : 1).split(" ");
    let block;
    if (head[0] === "!") {
      block = { kind: "figure", name: parts[0], from: Number(parts[1]), to: Number(parts[2]) };
    } else if (head[1] === "T") {
      const [top, rule, bottom, inset] = parts.map(Number);
      block = { kind: "table", from: top, rule, to: bottom, inset, lines };
    } else {
      const from = Number(parts[0]);
      block = { kind: "lines", from: from - 3, to: Number(parts[1] || from) + 2, lines };
    }
    block.gap = block.from - end;
    end = block.to;
    return block;
  });
};

const Line = ({ line, seed }) => {
  if (line === "-") return <Rule />;
  if (line.startsWith("## ")) return <Heading>{line.slice(3)}</Heading>;
  if (line.startsWith("# ")) return <Title>{line.slice(2)}</Title>;
  if (line.startsWith("^ ")) return <Caption>{inline(line.slice(2))}</Caption>;
  if (line[0] === "=") return <Text $justify>{line.slice(1)}</Text>;
  if (line[0] === "&") {
    const [, sign, name, value] = line.match(/^&([#.+]*)(.*)\|(.*)$/);
    return (
      <Entry $bold={sign === "#" || sign === "."} $indent={sign[0] === "+" ? sign.length * 5 + 4 : 0}>
        <span>{name}</span>
        {sign === "." && <Leader />}
        <em>{value}</em>
      </Entry>
    );
  }
  if (line[0] === "~") {
    const bare = line[1] === "~";
    const [count, last] = line.slice(bare ? 2 : 1).split(" ").map(Number);
    return Array.from({ length: count }, (_, i) => {
      const start = (seed * 41 + i * 36) % (corpus.length - 40);
      const tail = i === count - 1 && last < 30;
      const size = tail ? last : i === 0 && !bare ? 34 : 36;
      return (
        <Text key={i} $justify={!tail} $indent={i === 0 && !bare ? 6 : 0}>
          {corpus.slice(start, start + size)}
        </Text>
      );
    });
  }
  const depth = line.match(/^\+*/)[0].length;
  return <Text $indent={depth * 6}>{inline(line.slice(depth))}</Text>;
};

const Page = ({ page }) => (
  <Sheet $wide={page.wide}>
    <Body $wide={page.wide}>
      {parse(page.text).map((block, i) => {
        if (block.kind === "figure") {
          const Figure = figures[block.name];
          const height = block.to - block.from;
          return (
            <Drawing key={i} viewBox={`0 0 158 ${height}`} $gap={block.gap} $height={height}>
              <Figure />
            </Drawing>
          );
        }
        if (block.kind === "table") {
          const head = cellsOf(block.lines, "|");
          const body = cellsOf(block.lines, ":");
          return (
            <TableBox key={i} $gap={block.gap} $height={block.to - block.from} $inset={block.inset}>
              <Table $height={block.to - block.from}>
                {head.length > 0 && (
                  <Head $row={Math.floor((block.rule - block.from) / head.length)}>
                    {head.map((row, r) => (
                      <tr key={r}>{row.map((cell, c) => <th key={c}>{inline(cell)}</th>)}</tr>
                    ))}
                  </Head>
                )}
                <Rows>
                  {body.map((row, r) => (
                    <tr key={r}>{row.map((cell, c) => <td key={c}>{cell}</td>)}</tr>
                  ))}
                </Rows>
              </Table>
            </TableBox>
          );
        }
        return (
          <Block key={i} $gap={block.gap} $height={block.to - block.from}>
            {block.lines.map((line, n) => (
              <Line key={n} line={line} seed={block.from + n + Number(page.no || 0)} />
            ))}
          </Block>
        );
      })}
    </Body>
    <Marks $wide={page.wide} $inset={page.inset}>
      <i />
      <i />
      <i />
      <i />
    </Marks>
    <Folio>{page.no}</Folio>
  </Sheet>
);

/* ---------- window chrome ---------- */

const OfficeLogo = () => (
  <svg width="40" height="40" viewBox="0 0 40 40" aria-hidden="true">
    <defs>
      <radialGradient id="orb" cx="50%" cy="75%" r="75%">
        <stop offset="0" stopColor="#fff" />
        <stop offset="0.55" stopColor="#d4d9e2" />
        <stop offset="0.75" stopColor="#bcc3d0" />
        <stop offset="1" stopColor="#f4f6fa" />
      </radialGradient>
    </defs>
    <circle cx="20" cy="20" r="19" fill="#2b2f38" />
    <circle cx="20" cy="20" r="18" fill="url(#orb)" stroke="#e8ebf0" />
    <g fill="none" strokeWidth="3">
      <rect x="10" y="10" width="9" height="10" rx="2" stroke="#d9501e" />
      <rect x="22" y="14" width="7" height="6" rx="1" stroke="#3c8fd0" strokeWidth="2" strokeDasharray="4 1" />
      <rect x="12" y="23" width="7" height="7" rx="1" stroke="#f0a81e" strokeWidth="2" strokeDasharray="5 1" />
      <rect x="22" y="22" width="8" height="8" rx="2" stroke="#5da53a" />
    </g>
    <path d="M17 19h7v5h-7z" fill="#fff" stroke="#b66" strokeWidth="0.7" />
  </svg>
);

const SaveIcon = () => (
  <svg width="16" height="16" viewBox="0 0 16 16" aria-hidden="true">
    <path d="M1 1h13l1 1v13H1z" fill="#5b55c4" stroke="#2d2a86" />
    <path d="M4 1h8v7H4z" fill="#eef3fb" />
    <path d="M4 10h8v5H4z" fill="#20204c" />
    <path d="M8 11h2v3H8z" fill="#dfe6f5" />
  </svg>
);

const UndoIcon = () => (
  <svg width="14" height="14" viewBox="0 0 14 14" aria-hidden="true">
    <path d="M4 5c3-4 8-2 7 3-1 2-2 3-4 5" fill="none" stroke="#3f6cb8" strokeWidth="2.6" />
    <path d="M1 1v8h7z" fill="#5d8ad4" />
  </svg>
);

const RedoIcon = () => (
  <svg width="14" height="14" viewBox="0 0 14 14" aria-hidden="true">
    <path d="M4 3C1 5 1 12 7 12s6-6 3-8" fill="none" stroke="#9aa0a8" strokeWidth="2.6" />
    <path d="M7 1h6v6z" fill="#9aa0a8" />
  </svg>
);

const ViewIcon = ({ kind }) => (
  <svg width="12" height="12" viewBox="0 0 12 12" aria-hidden="true" fill="none" stroke="#4a5870">
    {kind === "page" && <path d="M1.5 .5h9v11h-9zM3 3h6M3 5h6M3 7h6M3 9h6" fill="#fff" />}
    {kind === "book" && <path d="M.5 1.5h4l1.5 1 1.5-1h4v8h-4L6 11 4.5 9.5h-4zM6 3v7M2 4h2M2 6h2M8 4h2M8 6h2" fill="#fff" />}
    {kind === "web" && (
      <>
        <path d="M.5 .5h9v9h-9zM2 3h6M2 5h6M2 7h3" fill="#fff" />
        <circle cx="9" cy="9" r="2.5" fill="#2e8a78" stroke="#2d5f8a" />
      </>
    )}
    {kind === "outline" && <path d="M1 1.5h6M4 4.5h6M1 7.5h6M5 10.5h6" stroke="#7688a8" />}
    {kind === "draft" && <path d="M0 1.5h12M0 4.5h12M0 7.5h12M0 10.5h12" stroke="#68799a" />}
  </svg>
);

const watermarks = [
  [535, 163],
  [1388, 177],
  [769, 426],
  [1122, 575],
  [536, 874],
  [1348, 885],
];

const App = () => {
  const [zoom, setZoom] = useState(6);
  const [view, setView] = useState("page");

  return (
    <Screen>
      <GlobalStyle />
      <Word>
        <TitleBar>
          <Orb type="button" aria-label="Office">
            <OfficeLogo />
          </Orb>
          <QuickBar>
            <ToolButton type="button" aria-label="保存"><SaveIcon /></ToolButton>
            <ToolButton type="button" aria-label="撤消"><UndoIcon /></ToolButton>
            <ToolButton type="button" aria-label="更多撤消">
              <svg width="6" height="5" viewBox="0 0 6 5"><path d="M0 1h6L3 4z" fill="#b9d0f4" /></svg>
            </ToolButton>
            <ToolButton type="button" aria-label="重复"><RedoIcon /></ToolButton>
          </QuickBar>
          <ToolButton type="button" aria-label="自定义">
            <svg width="6" height="8" viewBox="0 0 6 8"><path d="M0 0h6v1H0zM0 3h6L3 7z" fill="#dce8fa" /></svg>
          </ToolButton>
        </TitleBar>
        <Tabs>
          {["开始", "插入", "页面布局", "引用", "邮件", "审阅", "视图"].map((tab) => (
            <Tab key={tab} type="button">{tab}</Tab>
          ))}
          <Help type="button" aria-label="帮助">?</Help>
        </Tabs>
        <Work>
          <Corner type="button" aria-label="制表符"><i /></Corner>
          <TopRuler>
            <Strip>
              {["6", "2"].map((n) => <Tick key={n}>{n}</Tick>)}
              <Strip as="span" $white>
                {["2", "6", "10", "14", "18", "22", "26", "30", "34", "38"].map((n) => <Tick key={n}>{n}</Tick>)}
              </Strip>
              {["44", "48"].map((n) => <Tick key={n}>{n}</Tick>)}
              <Indents width="144" height="22" viewBox="0 0 144 22" aria-hidden="true">
                <path d="M1 1h8v4L5 9 1 5zM5 9l4 4v3H1v-3zM1 17h8v4H1zM117 9l4 4v3h-8v-3z" fill="#e9eff8" stroke="#5a6c8c" />
              </Indents>
            </Strip>
          </TopRuler>
          <RulerToggle>
            <button type="button" aria-label="标尺">
              <svg width="12" height="12" viewBox="0 0 12 12">
                <path d="M1 1h5v3h5v7H6V8H1z" fill="#eef2f8" stroke="#5a6c88" />
              </svg>
            </button>
          </RulerToggle>
          <SideRuler>
            <SideStrip>
              <SideTicks $height={22} $end={3}>
                {["6", "2"].map((n) => <span key={n}>{n}</span>)}
              </SideTicks>
              <SideTicks $white $height={181} $end={6}>
                {["2", "6", "10", "14", "18", "22", "26", "30", "34", "38", "42", "46", "50", "54"].map((n) => <span key={n}>{n}</span>)}
              </SideTicks>
              <SideTicks $height={24} $end={6}>
                <span>62</span>
              </SideTicks>
            </SideStrip>
          </SideRuler>
          <Desk>
            <Swoosh viewBox="0 0 400 260" aria-hidden="true">
              <path d="M0 120C80 40 200 10 320 0H0z" fill="#fff" opacity="0.16" />
              <path d="M0 100L60 75V180L0 260z" fill="#fff" opacity="0.06" />
              <path d="M0 118L60 86" stroke="#fff" opacity="0.3" />
            </Swoosh>
            {[rowOne, rowTwo, rowThree, rowFour].map((row, i) => (
              <PageRow key={i}>
                {row.map((page, n) => <Page key={n} page={page} />)}
              </PageRow>
            ))}
            <PageRow>
              {rowFive.map((page, n) => <Page key={n} page={page} />)}
              <Slot />
              <Slot />
            </PageRow>
          </Desk>
          <ScrollBar>
            <Arrow type="button" aria-label="向上">
              <svg width="10" height="6" viewBox="0 0 10 6"><path d="M5 0l5 6H0z" fill="#4a5878" /></svg>
            </Arrow>
            <Thumb />
            <Track />
            <Arrow type="button" aria-label="向下">
              <svg width="10" height="6" viewBox="0 0 10 6"><path d="M0 0h10L5 6z" fill="#3b4c78" /></svg>
            </Arrow>
            <Browse>
              <button type="button" aria-label="前一页">
                <svg width="8" height="8" viewBox="0 0 8 8"><path d="M4 0l4 4H0zM4 4l4 4H0z" fill="#3b72d8" /></svg>
              </button>
              <button type="button" aria-label="选择浏览对象">
                <svg width="8" height="8" viewBox="0 0 8 8"><circle cx="4" cy="4" r="3.5" fill="#888" stroke="#111" /><circle cx="3" cy="3" r="1.5" fill="#fff" /></svg>
              </button>
              <button type="button" aria-label="下一页">
                <svg width="8" height="8" viewBox="0 0 8 8"><path d="M0 0h8L4 4zM0 4h8L4 8z" fill="#3b72d8" /></svg>
              </button>
            </Browse>
          </ScrollBar>
        </Work>
        <Status>
          <Cell>页面: 1/51</Cell>
          <Cell>字数: 13,346</Cell>
          <Cell>中文(简体，中国)</Cell>
          <Cell>插入</Cell>
          <ViewPart>
            <Views>
              {["page", "book", "web", "outline", "draft"].map((kind) => (
                <ViewButton key={kind} type="button" aria-label={kind} $on={view === kind} onClick={() => setView(kind)}>
                  <ViewIcon kind={kind} />
                </ViewButton>
              ))}
            </Views>
            <Percent>20%</Percent>
            <Round type="button" aria-label="缩小" onClick={() => setZoom(Math.max(0, zoom - 5))}>
              <svg width="10" height="10" viewBox="0 0 10 10"><path d="M1 5h8" stroke="#3b5584" strokeWidth="2" /></svg>
            </Round>
            <Slider type="range" aria-label="显示比例" min="0" max="100" value={zoom} onChange={(event) => setZoom(Number(event.target.value))} />
            <Round type="button" aria-label="放大" onClick={() => setZoom(Math.min(100, zoom + 5))}>
              <svg width="10" height="10" viewBox="0 0 10 10"><path d="M0 5h10M5 0v10" stroke="#3b5584" strokeWidth="2" /></svg>
            </Round>
          </ViewPart>
        </Status>
      </Word>
      <Behind>
        <div />
        <div />
        <div><i /></div>
        <div />
      </Behind>
      <TaskBar><i /></TaskBar>
      {watermarks.map(([x, y]) => (
        <Watermark key={x + y} style={{ left: x, top: y }}>www.56doc.com</Watermark>
      ))}
    </Screen>
  );
};

export default App;

/* ---------- styles ---------- */

const GlobalStyle = createGlobalStyle`
  body {
    margin: 0;
    overflow: hidden;
    background: #000;
    font-family: "Open Sans", "Noto Sans CJK SC", sans-serif;
    font-size: 12px;
  }
  * {
    box-sizing: border-box;
  }
  button {
    margin: 0;
    padding: 0;
    border: 0;
    background: none;
    color: inherit;
    font: inherit;
  }
`;

const Screen = styled.main`
  position: relative;
  display: grid;
  grid-template: minmax(0, 1fr) 10px / minmax(0, 1fr) 8px;
  height: 100vh;
  overflow: hidden;
`;

const Word = styled.div`
  display: flex;
  flex-direction: column;
  min-height: 0;
`;

const TitleBar = styled.header`
  position: relative;
  display: flex;
  align-items: center;
  gap: 7px;
  height: 26px;
  padding-left: 38px;
  background: #000;
`;

const Orb = styled.button`
  position: absolute;
  z-index: 2;
  top: 2px;
  left: 2px;
  height: 40px;
`;

const QuickBar = styled.div`
  display: flex;
  align-items: center;
  gap: 6px;
  width: 95px;
  height: 24px;
  padding-left: 14px;
  border: 1px solid #6a6a6a;
  border-left: 0;
  border-radius: 0 12px 12px 0;
  background: linear-gradient(#505050, #3c3c3c);
`;

const ToolButton = styled.button`
  display: flex;
`;

const Tabs = styled.nav`
  display: flex;
  align-items: center;
  gap: 29px;
  height: 28px;
  padding: 2px 5px 0 60px;
  border-bottom: 2px solid #9db8dd;
  background: #bfdbff;
`;

const Tab = styled.button`
  color: #15428b;
  line-height: 20px;
  white-space: nowrap;
`;

const Help = styled.button`
  width: 13px;
  height: 13px;
  margin-left: auto;
  border-radius: 50%;
  background: #2a62c4;
  box-shadow: 0 0 0 1px #e4effc, 0 0 0 2px #5a80b8;
  color: #fff;
  font-size: 10px;
  font-weight: 700;
  line-height: 13px;
`;

const Work = styled.div`
  flex: 1;
  display: grid;
  grid-template: 23px minmax(0, 1fr) / 23px minmax(0, 1fr) 17px;
  min-height: 0;
`;

const Corner = styled.button`
  display: grid;
  place-items: center;
  border: 1px solid #4a6ea8;
  background: #b9d0f0;

  i {
    width: 13px;
    height: 13px;
    border: 1px solid #6a87b8;
    background: linear-gradient(#33415c, #33415c) 4px 3px / 2px 6px no-repeat,
      linear-gradient(#33415c, #33415c) 4px 7px / 5px 2px no-repeat, #dde9f8;
  }
`;

const TopRuler = styled.div`
  display: flex;
  align-items: center;
  padding-left: 45px;
  background: #9cbae1;
`;

const Strip = styled.div`
  position: relative;
  display: flex;
  height: ${(p) => (p.$white ? "10px" : "12px")};
  padding-right: ${(p) => (p.$white ? "4px" : "0")};
  border: ${(p) => (p.$white ? "0" : "1px solid #c6dcf8")};
  background: ${(p) => (p.$white ? "#fff" : "#b4cbeb")};
`;

const Tick = styled.span`
  width: 11px;
  color: #333;
  font-family: "Liberation Sans", sans-serif;
  font-size: 9px;
  line-height: 10px;
  text-align: center;
`;

const Indents = styled.svg`
  position: absolute;
  top: -5px;
  left: 15px;
`;

const RulerToggle = styled.div`
  display: flex;
  padding-top: 6px;
  background: linear-gradient(#33415c, #33415c) 4px 2px / 9px 2px no-repeat, #9cbae1;

  button {
    flex: 1;
    display: grid;
    place-items: center;
    border: 1px solid #7d8ca4;
    background: #c3cede;
  }
`;

const SideRuler = styled.div`
  display: flex;
  flex-direction: column;
  align-items: center;
  padding-top: 5px;
  background: #9cbae1;
`;

const SideStrip = styled.div`
  width: 12px;
  border: 1px solid #c6dcf8;
  background: #b4cbeb;
`;

const SideTicks = styled.div`
  display: flex;
  flex-direction: column;
  align-items: center;
  justify-content: space-between;
  height: ${(p) => p.$height}px;
  padding-bottom: ${(p) => p.$end}px;
  background: ${(p) => (p.$white ? "#fff" : "#b4cbeb")};

  span {
    min-height: 5px;
    color: #333;
    font-family: "Liberation Sans", sans-serif;
    font-size: 9px;
    line-height: 10px;
    writing-mode: vertical-rl;
    transform: rotate(180deg);
  }
  span:only-child {
    margin: auto 0;
  }
`;

const Desk = styled.div`
  position: relative;
  display: flex;
  flex-direction: column;
  gap: 6px;
  min-width: 0;
  padding-top: 6px;
  overflow: hidden;
  background: linear-gradient(#9dbde7, #7b9dcd 28%, #698dc0 48%, #557cb0 74%, #5f88c2 84%, #6592d1);
`;

const Swoosh = styled.svg`
  position: absolute;
  top: 0;
  left: 0;
  width: 400px;
  height: 260px;
`;

const PageRow = styled.div`
  position: relative;
  display: flex;
  flex-shrink: 0;
  align-items: center;
  justify-content: center;
  gap: 5px;
`;

const Slot = styled.div`
  flex: 0 0 158px;
`;

const Sheet = styled.article`
  position: relative;
  flex-shrink: 0;
  width: ${(p) => (p.$wide ? 223 : 158)}px;
  height: ${(p) => (p.$wide ? 158 : 222)}px;
  background: #fff;
  box-shadow: inset 0 0 0 1px #5a6470, 3px 3px 6px 1px rgba(20, 30, 50, 0.6);
  color: #444;
  font-size: 3px;

  text {
    fill: #444;
  }
`;

const Body = styled.div`
  height: 100%;
  padding: 0 ${(p) => (p.$wide ? 20 : 23)}px 0 ${(p) => (p.$wide ? 20 : 22)}px;
  overflow: hidden;
`;

const Block = styled.div`
  display: flex;
  flex-direction: column;
  justify-content: space-between;
  height: ${(p) => p.$height}px;
  margin-top: ${(p) => p.$gap}px;
  font-family: "Liberation Serif", "Noto Sans CJK SC", serif;
`;

const Text = styled.p`
  height: 5px;
  margin: 0;
  padding-left: ${(p) => p.$indent || 0}px;
  line-height: 5px;
  white-space: ${(p) => (p.$justify ? "normal" : "nowrap")};
  text-align-last: ${(p) => (p.$justify ? "justify" : "left")};
`;

const Title = styled.h2`
  height: 5px;
  margin: 0;
  color: #000;
  font-size: 5px;
  line-height: 5px;
  text-align: center;
  white-space: pre;
`;

const Heading = styled.h3`
  height: 5px;
  margin: 0;
  color: #000;
  font-size: 4px;
  line-height: 5px;
  white-space: nowrap;
`;

const Caption = styled.p`
  height: 5px;
  margin: 0;
  color: #222;
  line-height: 5px;
  text-align: center;
  white-space: pre;
`;

const Rule = styled.hr`
  width: 100%;
  height: 1px;
  margin: 2px 0;
  border: 0;
  background: #000;
`;

const Entry = styled.div`
  display: flex;
  align-items: baseline;
  justify-content: space-between;
  height: 5px;
  padding-left: ${(p) => p.$indent}px;
  color: ${(p) => (p.$bold ? "#000" : "#444")};
  font-size: ${(p) => (p.$bold ? "4px" : "3px")};
  font-weight: ${(p) => (p.$bold ? 700 : 400)};
  line-height: 5px;
  white-space: nowrap;

  em {
    font-size: 3px;
    font-style: normal;
    font-weight: 400;
  }
`;

const Leader = styled.span`
  flex: 1;
  border-bottom: 1px dotted #999;
`;

const Fraction = styled.span`
  display: inline-flex;
  flex-direction: column;
  align-items: center;
  vertical-align: middle;
  font-size: 3px;
  line-height: 3px;

  span:first-child {
    border-bottom: 1px solid #000;
  }
`;

const TableBox = styled.div`
  height: ${(p) => p.$height}px;
  margin: ${(p) => p.$gap}px ${(p) => p.$inset}px 0;
`;

const Table = styled.table`
  width: 100%;
  height: ${(p) => p.$height}px;
  border-collapse: collapse;
  border-top: 1px solid #000;
  color: #666;
  font-size: 2px;
  line-height: 3px;
  table-layout: fixed;

  th,
  td {
    padding: 0;
    font-weight: 400;
    text-align: center;
    white-space: nowrap;
  }
  th {
    color: #444;
    font-size: 3px;
  }
`;

const Head = styled.thead`
  border-bottom: 1px solid #000;

  tr {
    height: ${(p) => p.$row}px;
  }
`;

const Rows = styled.tbody`
  border-bottom: 1px solid #000;
`;

const Drawing = styled.svg`
  display: block;
  width: 158px;
  height: ${(p) => p.$height}px;
  margin: ${(p) => p.$gap}px -22px 0;
`;

/* the four corner marks of the text area */
const Marks = styled.div`
  position: absolute;
  inset: ${(p) => (p.$wide ? p.$inset - 5 : 14)}px ${(p) => (p.$wide ? 14 : 17)}px;
  display: grid;
  grid-template-columns: 5px 5px;
  justify-content: space-between;
  align-content: space-between;
  pointer-events: none;

  i {
    width: 5px;
    height: 5px;
    border: 0 solid #999;
  }
  i:nth-child(1) {
    border-width: 0 1px 1px 0;
  }
  i:nth-child(2) {
    border-width: 0 0 1px 1px;
  }
  i:nth-child(3) {
    border-width: 1px 1px 0 0;
  }
  i:nth-child(4) {
    border-width: 1px 0 0 1px;
  }
`;

const Folio = styled.span`
  position: absolute;
  right: 0;
  bottom: 10px;
  left: 0;
  color: #888;
  line-height: 4px;
  text-align: center;
`;

const ScrollBar = styled.div`
  display: flex;
  flex-direction: column;
  min-height: 0;
  background: linear-gradient(90deg, #7791c0, #8ea9d6);
`;

const Arrow = styled.button`
  display: grid;
  place-items: center;
  flex: 0 0 18px;
`;

const Thumb = styled.div`
  flex: 733;
  margin: 0 1px;
  border: 1px solid #4866a0;
  border-radius: 2px;
  background: linear-gradient(#6c7f9f, #6c7f9f) center 361px / 7px 1px no-repeat,
    linear-gradient(#6c7f9f, #6c7f9f) center 364px / 7px 1px no-repeat,
    linear-gradient(#6c7f9f, #6c7f9f) center 367px / 7px 1px no-repeat,
    linear-gradient(90deg, #f2f6fc, #c3d2ea);
`;

const Track = styled.div`
  flex: 132;
`;

const Browse = styled.div`
  display: flex;
  flex: 0 0 51px;
  flex-direction: column;
  align-items: center;
  justify-content: space-around;
  background: #a9c6f2;

  button {
    display: flex;
  }
`;

const Status = styled.footer`
  display: flex;
  height: 22px;
  border-top: 1px solid #6b8fb8;
  background: linear-gradient(#dbe9fd, #c5dbf8 35%, #b0cdf5 45%, #c6dcf9);
  color: #15305e;
`;

const Cell = styled.span`
  padding: 0 9px;
  border-right: 1px solid #8fb0dc;
  line-height: 20px;
  white-space: nowrap;
`;

const ViewPart = styled.div`
  display: flex;
  align-items: center;
  width: 287px;
  margin-left: auto;
  padding: 0 5px;
  border-left: 1px solid #6f95c8;
  background: linear-gradient(#c8dcf8, #a4c3ee 45%, #8fb2e4 50%, #b4d0f5);
`;

const Views = styled.div`
  display: flex;
  height: 19px;
  border: 1px solid #6d8fc0;
`;

const ViewButton = styled.button`
  display: grid;
  place-items: center;
  width: 18px;
  border-right: 1px solid #8faeda;
  background: ${(p) => (p.$on ? "linear-gradient(#fbe3a8, #f8c65a)" : "none")};
`;

const Percent = styled.span`
  margin: 0 17px 0 9px;
`;

const Round = styled.button`
  display: grid;
  place-items: center;
  width: 15px;
  height: 15px;
  border: 1px solid #3f5f94;
  border-radius: 50%;
  background: #dce9fb;
`;

const Slider = styled.input`
  flex: 1;
  min-width: 0;
  height: 16px;
  margin: 0 2px;
  appearance: none;
  background: linear-gradient(#e6effc, #e6effc) center / 1px 8px no-repeat,
    linear-gradient(#6d8fc4, #6d8fc4) center 7px / 100% 1px no-repeat,
    linear-gradient(#eef5ff, #eef5ff) center 8px / 100% 1px no-repeat;

  &::-webkit-slider-thumb {
    width: 9px;
    height: 14px;
    appearance: none;
    background: linear-gradient(#4a6698, #4a6698) center 3px / 1px 6px no-repeat, #d8e6fa;
    border: 1px solid #46628f;
    border-radius: 1px 1px 5px 5px;
  }
`;

/* the window that shows at the right edge */
const Behind = styled.div`
  display: flex;
  flex-direction: column;
  background: #fff;

  div:nth-child(1) {
    height: 32px;
    background: #dedede;
  }
  div:nth-child(2) {
    height: 38px;
    border-bottom: 1px solid #e2e2e2;
  }
  div:nth-child(3) {
    display: flex;
    align-items: center;
    justify-content: flex-end;
    height: 37px;
    border-bottom: 1px solid #d5d5d5;
  }
  div:nth-child(4) {
    flex: 1;
    margin: 8px 0 30px 6px;
    border-left: 1px solid #ddd;
  }
  i {
    width: 2px;
    height: 3px;
    background: #a02020;
  }
`;

const TaskBar = styled.div`
  grid-column: 1 / -1;
  padding-left: 522px;
  border-bottom: 2px solid #000;
  background: #1b2a35;

  i {
    display: block;
    width: 160px;
    height: 100%;
    background: #66727b;
  }
`;

const Watermark = styled.span`
  position: absolute;
  color: #a30f12;
  font-family: "Open Sans", sans-serif;
  font-size: 17px;
  font-weight: 700;
  letter-spacing: 3px;
  line-height: 20px;
  text-shadow: 1px 1px #fff, -1px -1px #fff, 1px -1px #fff, -1px 1px #fff, 2px 0 #fff, -2px 0 #fff, 0 2px #fff, 0 -2px #fff;
  transform: translate(-50%, -50%) rotate(-41deg);
`;
